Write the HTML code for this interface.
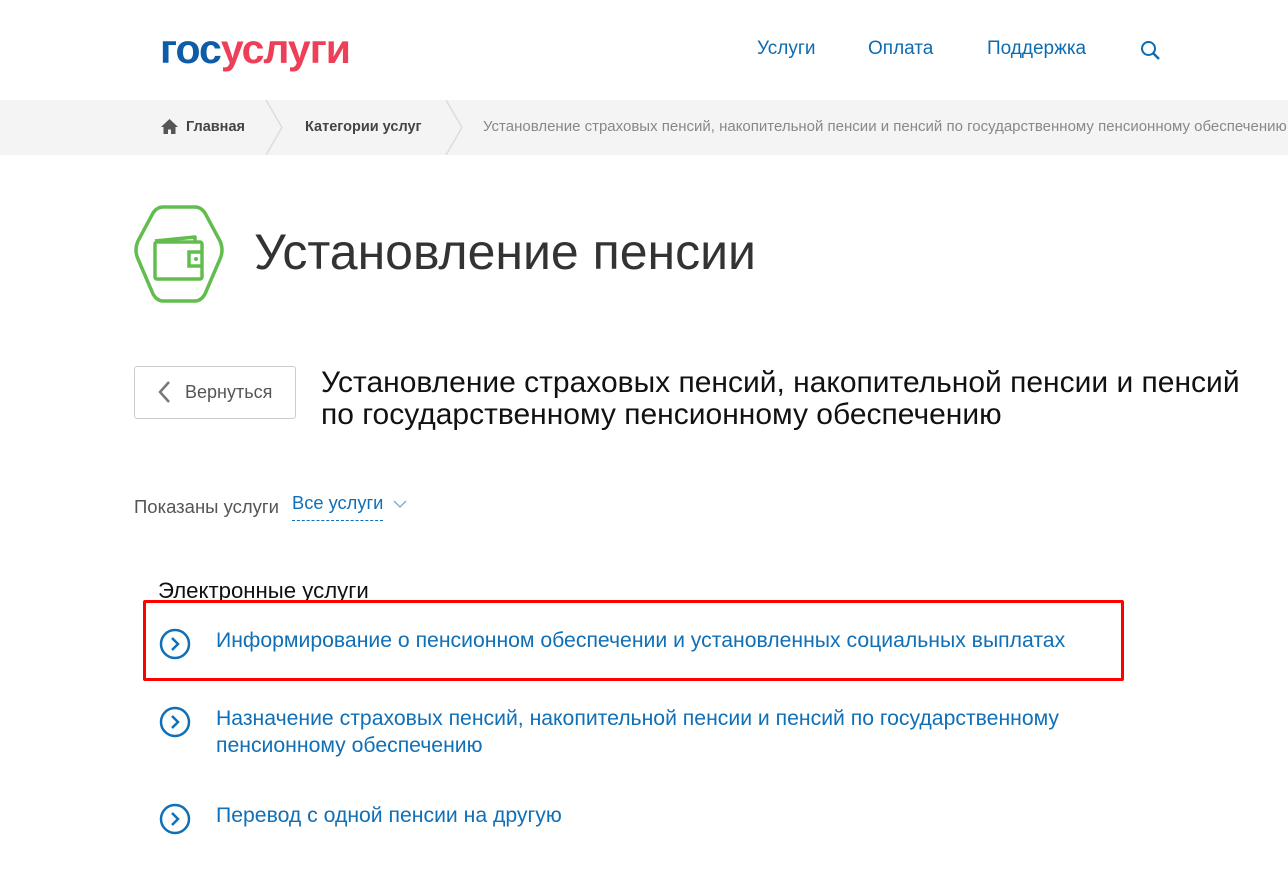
<!DOCTYPE html>
<html><head><meta charset="utf-8"><style>
body{margin:0;width:1288px;height:876px;overflow:hidden;background:#fff;font-family:"Liberation Sans",Arial,sans-serif;position:relative}
.a{position:absolute;white-space:nowrap}
.logo{left:160px;top:26px;font-size:41px;font-weight:bold;letter-spacing:-1px}
.nav{top:38px;font-size:19px;color:#0d6bb0}
.bc{left:0;top:100px;width:1288px;height:55px;background:#f4f4f4}
.bct{top:119px;font-size:14.5px;font-weight:bold;color:#444}
.lnk{color:#0f6fb7;font-size:21.2px;left:216px}
</style></head><body>
<div class="a logo"><span style="color:#0d5ca8">гос</span><span style="color:#ee3f58">услуги</span></div>
<div class="a nav" style="left:757px">Услуги</div>
<div class="a nav" style="left:868px">Оплата</div>
<div class="a nav" style="left:987px">Поддержка</div>
<svg class="a" style="left:1140px;top:40px" width="22" height="22" viewBox="0 0 22 22"><circle cx="8.5" cy="8.5" r="6.5" fill="none" stroke="#0d6bb0" stroke-width="2"/><path d="M13 13l6 6" stroke="#0d6bb0" stroke-width="2.4"/></svg>
<div class="a bc"></div>
<svg class="a" style="left:260px;top:100px" width="210" height="55"><path d="M6 0l16 27.5L6 55M186 0l16 27.5L186 55" fill="none" stroke="#ddd" stroke-width="1.5"/></svg>
<svg class="a" style="left:161px;top:119px" width="17" height="15" viewBox="0 0 17 15"><path d="M8.5 0L0 8h2.5v7h4.5v-4.5h3V15h4.5V8H17z" fill="#555"/></svg>
<div class="a bct" style="left:186px">Главная</div>
<div class="a bct" style="left:305px">Категории услуг</div>
<div class="a bct" style="left:483px;font-weight:normal;color:#888;font-size:15px;top:118px">Установление страховых пенсий, накопительной пенсии и пенсий по государственному пенсионному обеспечению</div>
<svg class="a" style="left:133px;top:204px" width="92" height="100" viewBox="0 0 92 100"><path d="M30 3h32q6 0 10 6l15 28q4 9 0 18L72 90q-4 7-10 7H30q-6 0-10-7L5 55q-4-9 0-18L20 9q4-6 10-6z" fill="none" stroke="#62bd4f" stroke-width="3.5"/><path d="M22 37l40-4v5" fill="none" stroke="#62bd4f" stroke-width="3.5" stroke-linejoin="round"/><rect x="22" y="38" width="47" height="37" rx="2" fill="none" stroke="#62bd4f" stroke-width="3.5"/><path d="M70 48h-14v14h14" fill="none" stroke="#62bd4f" stroke-width="3.5"/><circle cx="63" cy="55" r="2" fill="#62bd4f"/></svg>
<div class="a" style="left:254px;top:223px;font-size:50px;color:#333;font-weight:300">Установление пенсии</div>
<div class="a" style="left:134px;top:366px;width:160px;height:51px;border:1px solid #ccc;border-radius:3px"></div>
<svg class="a" style="left:157px;top:381px" width="14" height="22"><path d="M12 1L3 11l9 10" fill="none" stroke="#777" stroke-width="2.5"/></svg>
<div class="a" style="left:185px;top:382px;font-size:18px;color:#555">Вернуться</div>
<div class="a" style="left:321px;top:367px;font-size:30px;color:#111;line-height:32px">Установление страховых пенсий, накопительной пенсии и пенсий<br>по государственному пенсионному обеспечению</div>
<div class="a" style="left:134px;top:496px;font-size:18.5px;color:#555">Показаны услуги</div>
<div class="a" style="left:292px;top:492px;font-size:18.3px;color:#0f6fb7;border-bottom:1px dashed #0f6fb7;padding-bottom:6px">Все услуги</div>
<svg class="a" style="left:393px;top:499px" width="14" height="10"><path d="M1 2l6 6 6-6" fill="none" stroke="#7aa7d0" stroke-width="1.3"/></svg>
<div class="a" style="left:158px;top:578px;font-size:22.2px;color:#111">Электронные услуги</div>
<div class="a" style="left:143px;top:600px;width:975px;height:75px;border:3px solid #f00;border-radius:2px"></div>
<svg class="a" style="left:159px;top:628px" width="32" height="32"><circle cx="16" cy="16" r="14" fill="none" stroke="#0f6fb7" stroke-width="2.5"/><path d="M13 10l6 6-6 6" fill="none" stroke="#0f6fb7" stroke-width="2.5"/></svg>
<div class="a lnk" style="top:629px">Информирование о пенсионном обеспечении и установленных социальных выплатах</div>
<svg class="a" style="left:159px;top:706px" width="32" height="32"><circle cx="16" cy="16" r="14" fill="none" stroke="#0f6fb7" stroke-width="2.5"/><path d="M13 10l6 6-6 6" fill="none" stroke="#0f6fb7" stroke-width="2.5"/></svg>
<div class="a lnk" style="top:705px;line-height:27px">Назначение страховых пенсий, накопительной пенсии и пенсий по государственному<br>пенсионному обеспечению</div>
<svg class="a" style="left:159px;top:803px" width="32" height="32"><circle cx="16" cy="16" r="14" fill="none" stroke="#0f6fb7" stroke-width="2.5"/><path d="M13 10l6 6-6 6" fill="none" stroke="#0f6fb7" stroke-width="2.5"/></svg>
<div class="a lnk" style="top:804px">Перевод с одной пенсии на другую</div>
</body></html>
